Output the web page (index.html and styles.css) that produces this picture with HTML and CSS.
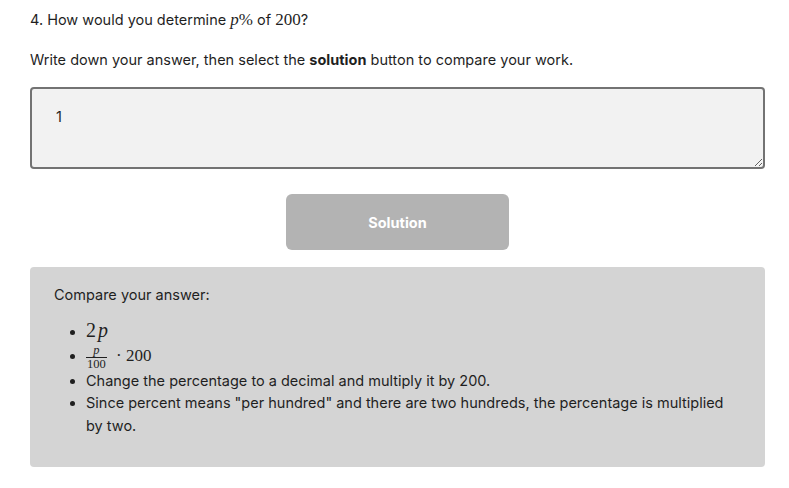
FILE: index.html
```html
<!DOCTYPE html>
<html>
<head>
<meta charset="utf-8">
<link rel="stylesheet" href="styles.css">
</head>
<body>
<div class="page">
  <p class="question">4. How would you determine <span class="math"><i>p</i>%</span> of <span class="math">200</span>?</p>
  <p class="instructions">Write down your answer, then select the <b>solution</b> button to compare your work.</p>
  <textarea class="answer">1</textarea>
  <div class="actions">
    <button class="solution-btn">Solution</button>
  </div>
  <div class="solution-box">
    <p class="compare">Compare your answer:</p>
    <ul class="answers">
      <li><span class="math big">2<i class="var">p</i></span></li>
      <li class="frac-row"><span class="math"><span class="frac"><span class="num"><i>p</i></span><span class="den">100</span></span> · 200</span></li>
      <li>Change the percentage to a decimal and multiply it by 200.</li>
      <li>Since percent means "per hundred" and there are two hundreds, the percentage is multiplied by two.</li>
    </ul>
  </div>
</div>
</body>
</html>
```

FILE: styles.css
```css
html, body {
  margin: 0;
  padding: 0;
  background: #ffffff;
}
body {
  font-family: Inter, "Liberation Sans", sans-serif;
  font-size: 14.5px;
  color: #1f1f1f;
  line-height: 24px;
}
.page {
  padding: 8px 24px 0 30px;
}
.question {
  margin: 0;
}
.instructions {
  margin: 16px 0 15px 0;
}
.math {
  font-family: "Liberation Serif", "DejaVu Serif", serif;
  font-size: 17px;
}
.math.big {
  font-size: 20px;
}
.var {
  margin-left: 2px;
}
.answer {
  display: block;
  box-sizing: border-box;
  width: 100%;
  height: 82px;
  margin: 0;
  padding: 16px 24px;
  border: 2px solid #737373;
  border-radius: 4px;
  background: #f2f2f2;
  font-family: Inter, "Liberation Sans", sans-serif;
  font-size: 14.5px;
  line-height: 24px;
  color: #1f1f1f;
  resize: vertical;
}
.actions {
  display: flex;
  justify-content: center;
  margin-top: 25px;
}
.solution-btn {
  width: 223px;
  height: 56px;
  border: none;
  border-radius: 6px;
  background: #b3b3b3;
  color: #ffffff;
  font-family: Inter, "Liberation Sans", sans-serif;
  font-size: 14.5px;
  font-weight: 700;
}
.solution-box {
  margin-top: 17px;
  background: #d4d4d4;
  border-radius: 4px;
  padding: 16px 24px 29px 24px;
  height: 200px;
  box-sizing: border-box;
}
.compare {
  margin: 0 0 12px 0;
}
.answers {
  margin: 0;
  padding-left: 32px;
  line-height: 22.5px;
}
.frac-row {
  line-height: 24px;
}
.frac {
  display: inline-block;
  vertical-align: -7px;
  font-size: 12.5px;
  line-height: 11px;
  margin-right: 5px;
  text-align: center;
}
.frac .num {
  display: block;
  border-bottom: 1px solid #1f1f1f;
  padding: 0 3px 1px;
}
.frac .den {
  display: block;
  padding: 1px 1px 0;
}
```
